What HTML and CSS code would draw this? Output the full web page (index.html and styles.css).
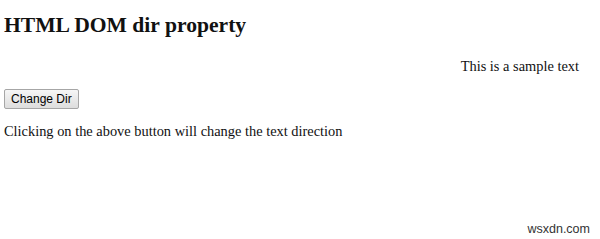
FILE: index.html
```html
<!DOCTYPE html>
<html lang="en">
<head>
  <meta charset="utf-8">
  <title>HTML DOM dir property</title>
  <link rel="stylesheet" href="styles.css">
  <script>
    function changeDir() {
      const el = document.getElementById('sample');
      el.dir = el.dir === 'rtl' ? 'ltr' : 'rtl';
    }
  </script>
</head>
<body>
  <h1>HTML DOM dir property</h1>
  <div id="sample" class="sample" dir="rtl">This is a sample text</div>
  <button class="change-button" onclick="changeDir()">Change Dir</button>
  <p class="info">Clicking on the above button will change the text direction</p>
  <div class="watermark">wsxdn.com</div>
</body>
</html>
```

FILE: styles.css
```css
body {
  font-family: "Liberation Serif", "Times New Roman", serif;
  font-size: 14.4px;
  color: #111;
  background-color: #fff;
  margin: 0;
  padding: 0 21px 0 4px;
  height: 239px;
  box-sizing: border-box;
  position: relative;
}

h1 {
  font-size: 21.6px;
  margin: 13px 0 20px;
}

.sample {
  margin: 0;
}

.change-button {
  display: block;
  margin-top: 14px;
  height: 20px;
  padding: 0 6px;
  font-family: "Liberation Sans", Arial, sans-serif;
  font-size: 12px;
  color: #000;
  background: linear-gradient(#f6f6f6, #dddddd);
  border: 1px solid #a6a6a6;
  border-radius: 2px;
}

.info {
  margin: 14px 0 0;
}

.watermark {
  position: absolute;
  right: 10px;
  bottom: 3px;
  font-family: "Liberation Sans", Arial, sans-serif;
  font-size: 12.5px;
  color: #333;
}
```
